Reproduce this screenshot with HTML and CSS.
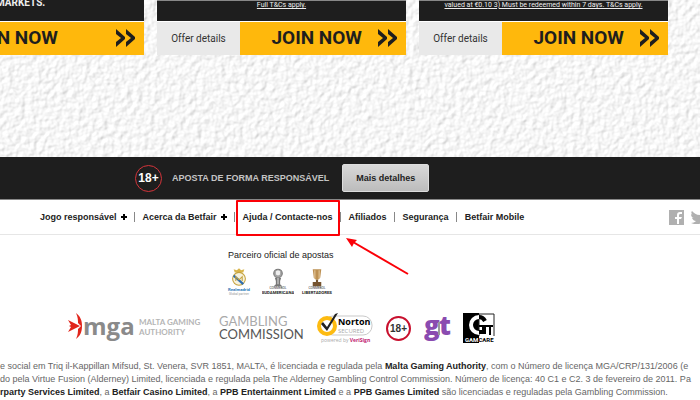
FILE: index.html
```html
<!DOCTYPE html>
<html lang="pt">
<head>
<meta charset="UTF-8">
<title>Betfair</title>
<link rel="stylesheet" href="styles.css">
</head>
<body>
<section class="promos">
    <svg class="texture" aria-hidden="true">
        <filter id="plaster" x="0" y="0" width="100%" height="100%" color-interpolation-filters="sRGB">
            <feTurbulence type="fractalNoise" baseFrequency="0.17" numOctaves="2" seed="4"/>
            <feDiffuseLighting surfaceScale="0.8" diffuseConstant="1.06" lighting-color="#f8f8f8">
                <feDistantLight azimuth="220" elevation="70"/>
            </feDiffuseLighting>
        </filter>
        <rect width="100%" height="100%" filter="url(#plaster)"/>
    </svg>
    <div class="cards">
        <article class="card">
            <div class="terms headline">MARKETS.</div>
            <div class="card-actions">
                <button class="join join-wide">JOIN NOW
                    <svg class="chevrons" viewBox="0 0 20 20"><path d="M0 1l9 8v2l-9 8v-5l5-4-5-4zM10 1l9 8v2l-9 8v-5l5-4-5-4z"/></svg>
                </button>
            </div>
        </article>
        <article class="card ruled">
            <div class="terms"><a href="#">Full T&amp;Cs apply.</a></div>
            <div class="card-actions">
                <button class="details">Offer details</button>
                <button class="join">JOIN NOW
                    <svg class="chevrons" viewBox="0 0 20 20"><path d="M0 1l9 8v2l-9 8v-5l5-4-5-4zM10 1l9 8v2l-9 8v-5l5-4-5-4z"/></svg>
                </button>
            </div>
        </article>
        <article class="card ruled">
            <div class="terms"><a href="#">valued at €0.10 3) Must be redeemed within 7 days. T&amp;Cs apply.</a></div>
            <div class="card-actions">
                <button class="details">Offer details</button>
                <button class="join">JOIN NOW
                    <svg class="chevrons" viewBox="0 0 20 20"><path d="M0 1l9 8v2l-9 8v-5l5-4-5-4zM10 1l9 8v2l-9 8v-5l5-4-5-4z"/></svg>
                </button>
            </div>
        </article>
    </div>
</section>

<section class="responsible">
    <span class="age">18+</span>
    <span class="responsible-text">APOSTA DE FORMA RESPONSÁVEL</span>
    <button class="more">Mais detalhes</button>
</section>

<nav class="footer-nav">
    <ul class="links">
        <li><a href="#">Jogo responsável</a><svg class="plus" viewBox="0 0 6 6"><path d="M2 0h2v2h2v2H4v2H2V4H0V2h2z"/></svg></li>
        <li><a href="#">Acerca da Betfair</a><svg class="plus" viewBox="0 0 6 6"><path d="M2 0h2v2h2v2H4v2H2V4H0V2h2z"/></svg></li>
        <li class="marked"><a href="#">Ajuda / Contacte-nos</a>
            <svg class="arrow" viewBox="0 0 64 38"><path d="M7 4L62 36" stroke="#fb0007" stroke-width="2"/><path d="M0 0l11 2-3 3-2 4z" fill="#fb0007"/></svg>
        </li>
        <li><a href="#">Afiliados</a></li>
        <li><a href="#">Segurança</a></li>
        <li><a href="#">Betfair Mobile</a></li>
    </ul>
    <div class="social">
        <a href="#" aria-label="Facebook"><svg viewBox="0 0 15 15"><path d="M0 0h15v15H0z"/><path d="M8 14V9H6V7h2V5c0-2 1-3 3-3h2v2h-1c-1 0-2 0-2 1v2h3l-1 2h-2v5z" fill="#fff"/></svg></a>
        <a href="#" aria-label="Twitter"><svg viewBox="0 0 18 15"><path d="M1 1c2 2 4 4 8 4 0-3 2-5 4-5 1 0 2 0 3 1l2-1-1 2 1 1-2 1c0 6-4 10-10 10-2 0-4 0-6-1 2 0 4-1 5-2-2 0-3-1-4-3h2C1 8 0 6 0 4l2 1C0 4 0 2 1 1z"/></svg></a>
    </div>
</nav>

<section class="partners">
    <h2>Parceiro oficial de apostas</h2>
    <div class="clubs">
        <svg class="club" viewBox="0 0 30 26">
            <path d="M11 4l-1-3 3 1 2-2 2 2 3-1-1 3z" fill="#d9b54a"/>
            <circle cx="15" cy="10" r="6" fill="#f7f2dc" stroke="#c4a23e"/>
            <path d="M10 7l9 8" stroke="#2e6db0" stroke-width="2"/>
            <path d="M12 12V8l3 3 3-3v4" fill="none" stroke="#c4a23e"/>
            <text x="15" y="21" class="club-blue">Realmadrid</text>
            <text x="15" y="25" class="club-small">Global partner</text>
        </svg>
        <svg class="club" viewBox="0 0 30 26">
            <circle cx="15" cy="5" r="4" fill="#a3a3a3" stroke="#777"/>
            <path d="M13 3l2-1 2 1v3l-2 1-2-1z" fill="#eee"/>
            <path d="M12 9h6l-1 3v3l2 2h-8l2-2v-3z" fill="#777"/>
            <path d="M15 9v6" stroke="#ddd"/>
            <text x="15" y="20" class="club-small dark">CONMEBOL</text>
            <text x="15" y="24" class="club-name">SUDAMERICANA</text>
        </svg>
        <svg class="club" viewBox="0 0 30 26">
            <path d="M11 1h8l-1 8-2 2h-2l-2-2z" fill="#bd9052"/>
            <path d="M13 2v8M17 2v8" stroke="#e4c89b"/>
            <path d="M14 11h2v2h3v4h-8v-4h3z" fill="#75532f"/>
            <text x="15" y="20" class="club-small dark">CONMEBOL</text>
            <text x="15" y="24" class="club-name">LIBERTADORES</text>
        </svg>
    </div>
</section>

<section class="regulators">
    <svg class="mga" viewBox="0 0 140 30">
        <path d="M0 7l12 6-12 6 3-5-2-1 2-1z" fill="#e1251b"/>
        <path d="M8 0c4 3 6 7 6 13s-2 10-6 13c2-4 2-8 2-10l3-3-3-3c0-2 0-6-2-10z" fill="#e1251b"/>
        <text x="15" y="22" class="mga-mark">mga</text>
        <text x="71" y="12" class="mga-name">MALTA GAMING</text>
        <text x="71" y="22" class="mga-name">AUTHORITY</text>
    </svg>
    <div class="commission"><span>GAMBLING</span>COMMISSION</div>
    <svg class="norton" viewBox="0 0 56 32">
        <rect x="7" y="4" width="48" height="19" rx="9" fill="#fff" stroke="#c9c9c9"/>
        <circle cx="10" cy="14" r="8" fill="#fff" stroke="#fdbb11" stroke-width="4"/>
        <path d="M4 12l2-2 4 5 8-13 3-1-11 18z" fill="#222"/>
        <text x="21" y="13" class="norton-name">Norton</text>
        <text x="21" y="21" class="norton-sec">SECURED</text>
        <text x="4" y="30" class="norton-by">powered by <tspan>VeriSign</tspan></text>
    </svg>
    <span class="age age-light">18+</span>
    <svg class="gt" viewBox="0 0 28 30">
        <text x="0" y="22" class="gt-mark">g</text>
        <text x="15" y="22" class="gt-mark">t</text>
        <path d="M14 9h2v13h-2z" fill="#999"/>
    </svg>
    <svg class="gamcare" viewBox="0 0 32 30">
        <path d="M0 0h16v24H0z"/>
        <path d="M16 1h15v23H16z" fill="#fff" stroke="#222"/>
        <path d="M16 4a8 8 0 0 0 0 16" fill="none" stroke="#fff" stroke-width="4"/>
        <path d="M16 4q4 0 6 4M16 19h5v-6" fill="none" stroke="#000" stroke-width="4"/>
        <path d="M16 13h14M27 13v9" stroke="#000" stroke-width="2"/>
        <path d="M0 23h16v7H0z"/>
        <path d="M16 23h16v7H16z" fill="#fff"/>
        <text x="2" y="29" class="gamcare-name"><tspan fill="#fff">GAM</tspan>CARE</text>
    </svg>
</section>

<footer class="legal">
    <p>e social em Triq il-Kappillan Mifsud, St. Venera, SVR 1851, MALTA, é licenciada e regulada pela <b>Malta Gaming Authority</b>, com o Número de licença MGA/CRP/131/2006 (e</p>
    <p>do pela Virtue Fusion (Alderney) Limited, licenciada e regulada pela The Alderney Gambling Control Commission. Número de licença: 40 C1 e C2. 3 de fevereiro de 2011. Pa</p>
    <p><b>rparty Services Limited</b>, a <b>Betfair Casino Limited</b>, a <b>PPB Entertainment Limited</b> e a <b>PPB Games Limited</b> são licenciadas e reguladas pela Gambling Commission.</p>
</footer>
</body>
</html>
```
FILE: styles.css
```css
body {
    margin: 0;
    background: #fff;
    font-family: "Liberation Sans", Arial, sans-serif;
    font-size: 9px;
    color: #222;
    overflow-x: hidden;
}
a {
    color: inherit;
    text-decoration: none;
}
button {
    border: 0;
    padding: 0;
    cursor: pointer;
}
.promos {
    position: relative;
    overflow: hidden;
    background: #f0f0f0;
    padding-bottom: 102px;
}
.texture {
    position: absolute;
    width: 100%;
    height: 100%;
}
.cards {
    position: relative;
    display: flex;
    gap: 13px;
    margin-left: -105px;
}
.card {
    flex: 0 0 249px;
    background: #1e1e1e;
}
.ruled {
    border-top: 1px solid #888;
}
.ruled .terms {
    height: 20px;
}
.terms {
    height: 21px;
    border-bottom: 1px solid #fff;
    color: #eee;
    font: 7px/9px Roboto, sans-serif;
    text-align: center;
    white-space: nowrap;
}
.terms a {
    text-decoration: underline;
}
.headline {
    font: bold 10px/5px Roboto, sans-serif;
    text-align: left;
    text-indent: 101px;
}
.card-actions {
    display: flex;
    height: 33px;
}
.details {
    flex: 0 0 83px;
    background: #e9e9e9;
    color: #333;
    font: 10px/30px Roboto, sans-serif;
}
.join {
    box-sizing: border-box;
    flex: 1;
    display: flex;
    align-items: center;
    justify-content: flex-end;
    gap: 16px;
    padding: 0 8px 2px 0;
    background: #ffb80c;
    color: #1e1e1e;
    font: bold 19px Roboto, sans-serif;
}
.join-wide {
    gap: 58px;
}
.chevrons {
    width: 20px;
    height: 20px;
    fill: #1e1e1e;
}
.responsible {
    display: flex;
    align-items: center;
    height: 42px;
    padding-left: 135px;
    background: #1e1e1e;
    border-bottom: 1px solid #888;
    color: #c4c4c4;
}
.age {
    box-sizing: border-box;
    width: 27px;
    height: 27px;
    border: 1px solid #d3343a;
    border-radius: 50%;
    color: #fff;
    font: bold 12px/25px "Liberation Sans", Arial, sans-serif;
    text-align: center;
}
.responsible-text {
    margin: 0 13px 0 10px;
    font-weight: bold;
}
.more {
    width: 87px;
    height: 28px;
    border: 1px solid #ddd;
    border-radius: 2px;
    background: linear-gradient(#d8d8d8, #bcbcbc);
    color: #222;
    font: bold 9px "Liberation Sans", Arial, sans-serif;
}
.footer-nav {
    display: flex;
    justify-content: space-between;
    height: 34px;
    border-bottom: 1px solid #e6e6e6;
    font-weight: bold;
}
.links {
    display: flex;
    align-items: center;
    margin: 0;
    padding: 0 0 0 32px;
    list-style: none;
    white-space: nowrap;
}
.links li {
    display: flex;
    align-items: center;
    gap: 4px;
    padding: 0 7px 0 8px;
    border-right: 1px solid #888;
    line-height: 10px;
}
.links li:last-child {
    border: 0;
}
.plus {
    width: 6px;
    height: 6px;
}
.marked {
    position: relative;
}
.marked::before {
    content: "";
    position: absolute;
    inset: -12px 0 -14px 1px;
    border: 2px solid #fb0007;
    border-radius: 1px;
}
.arrow {
    position: absolute;
    left: 111px;
    top: 26px;
    width: 64px;
    height: 38px;
}
.social {
    display: flex;
    align-items: center;
    gap: 7px;
    margin-right: -9px;
}
.social svg {
    display: block;
    height: 15px;
    fill: #b0b0b0;
}
.partners {
    display: flex;
    flex-direction: column;
    gap: 7px;
    padding: 14px 0 0 228px;
}
.partners h2 {
    margin: 0;
    font: 9px/12px "Liberation Sans", Arial, sans-serif;
    white-space: nowrap;
}
.clubs {
    display: flex;
    gap: 7px;
    margin-left: -5px;
}
.club {
    flex: none;
    width: 32px;
    height: 28px;
}
.club text {
    text-anchor: middle;
    font-family: Roboto, sans-serif;
}
.club .club-blue {
    font-size: 4px;
    font-weight: bold;
    fill: #2e78b8;
}
.club .club-small {
    font-size: 3px;
    fill: #999;
}
.club .dark {
    fill: #333;
}
.club .club-name {
    font-size: 4px;
    font-weight: bold;
    fill: #222;
}
.regulators {
    display: flex;
    align-items: center;
    height: 34px;
    padding: 15px 0 0 68px;
}
.mga {
    width: 140px;
    height: 30px;
}
.mga-mark {
    font: bold 24px "Open Sans", sans-serif;
    fill: #8a8a8a;
}
.mga-name {
    font: 9px "Noto Sans", sans-serif;
    fill: #b5b5b5;
}
.mga .mga-name {
    font-size: 8px;
    font-family: Lato, sans-serif;
    font-weight: bold;
}
.commission {
    width: 84px;
    margin: 0 14px 0 11px;
    color: #555;
    font: 13px/13px Lato, sans-serif;
}
.commission span {
    display: block;
    color: #aaa;
}
.norton {
    width: 56px;
    height: 32px;
}
.norton-name {
    font: bold 9px "Open Sans", sans-serif;
}
.norton-sec {
    font: 6px "Open Sans", sans-serif;
    fill: #aaa;
}
.norton-by {
    font: 5px "Open Sans", sans-serif;
    fill: #aaa;
}
.norton-by tspan {
    fill: #c02070;
    font-weight: bold;
}
.age-light {
    width: 25px;
    height: 25px;
    margin: 0 13px;
    border: 2px solid #c8102e;
    color: #333;
    font-size: 10px;
    line-height: 21px;
}
.gt {
    width: 28px;
    height: 30px;
    margin-right: 11px;
}
.gt-mark {
    font: 800 26px "Open Sans", sans-serif;
    fill: #8a4bb0;
}
.gamcare {
    width: 32px;
    height: 30px;
}
.gamcare-name {
    font: bold 6px Roboto, sans-serif;
}
.legal {
    padding-top: 15px;
    overflow: hidden;
    color: #666;
    white-space: nowrap;
}
.legal p {
    margin: 0;
    line-height: 13px;
}
.legal b {
    color: #222;
}
```
